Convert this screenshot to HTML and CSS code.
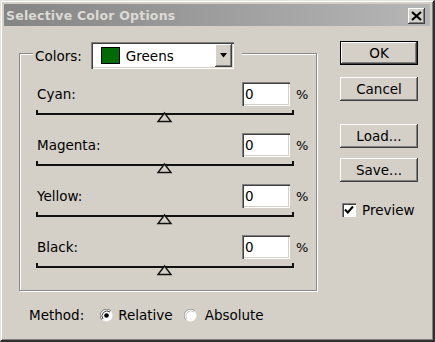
FILE: index.html
```html
<!DOCTYPE html>
<html>
<head>
<meta charset="utf-8">
<link rel="stylesheet" href="styles.css">
</head>
<body>
<div class="window">
  <div class="titlebar">
    <span class="title">Selective Color Options</span>
    <span class="close">
      <svg width="11" height="10" viewBox="0 0 11 10"><path d="M1 1 L10 9 M10 1 L1 9" stroke="#000" stroke-width="2.2" fill="none"/></svg>
    </span>
  </div>
  <div class="main">
    <div class="left">
      <div class="group">
        <div class="group-head">
          <span class="lbl">Colors:</span>
          <div class="select">
            <span class="swatch"></span>
            <span class="select-text">Greens</span>
            <span class="select-btn"><svg width="9" height="5" viewBox="0 0 9 5"><path d="M1 0 H8 L4.5 4.5 Z" fill="#000"/></svg></span>
          </div>
        </div>
        <div class="rows">
          <div class="row">
            <div class="row-top"><span class="row-lbl">Cyan:</span><span class="num">0</span><span class="pct">%</span></div>
            <svg class="slider" width="258" height="15" viewBox="0 0 258 15"><path d="M1 2 V7 M257 2 V7" stroke="#111" stroke-width="2"/><path d="M0 6 H258" stroke="#111" stroke-width="2"/><path d="M128.5 5 L135 13.5 H122 Z" fill="#d4d0c8" stroke="#111" stroke-width="1.4"/></svg>
          </div>
          <div class="row">
            <div class="row-top"><span class="row-lbl">Magenta:</span><span class="num">0</span><span class="pct">%</span></div>
            <svg class="slider" width="258" height="15" viewBox="0 0 258 15"><path d="M1 2 V7 M257 2 V7" stroke="#111" stroke-width="2"/><path d="M0 6 H258" stroke="#111" stroke-width="2"/><path d="M128.5 5 L135 13.5 H122 Z" fill="#d4d0c8" stroke="#111" stroke-width="1.4"/></svg>
          </div>
          <div class="row">
            <div class="row-top"><span class="row-lbl">Yellow:</span><span class="num">0</span><span class="pct">%</span></div>
            <svg class="slider" width="258" height="15" viewBox="0 0 258 15"><path d="M1 2 V7 M257 2 V7" stroke="#111" stroke-width="2"/><path d="M0 6 H258" stroke="#111" stroke-width="2"/><path d="M128.5 5 L135 13.5 H122 Z" fill="#d4d0c8" stroke="#111" stroke-width="1.4"/></svg>
          </div>
          <div class="row">
            <div class="row-top"><span class="row-lbl">Black:</span><span class="num">0</span><span class="pct">%</span></div>
            <svg class="slider" width="258" height="15" viewBox="0 0 258 15"><path d="M1 2 V7 M257 2 V7" stroke="#111" stroke-width="2"/><path d="M0 6 H258" stroke="#111" stroke-width="2"/><path d="M128.5 5 L135 13.5 H122 Z" fill="#d4d0c8" stroke="#111" stroke-width="1.4"/></svg>
          </div>
        </div>
      </div>
      <div class="method">
        <span>Method:</span>
        <svg class="radio r1" width="13" height="13" viewBox="0 0 13 13"><circle cx="6.5" cy="6.5" r="6" fill="#fff"/><path d="M11 2 A6 6 0 0 0 2 11" stroke="#808080" stroke-width="1" fill="none"/><path d="M10 3 A5 5 0 0 0 3 10" stroke="#404040" stroke-width="1" fill="none"/><circle cx="6.5" cy="6.5" r="2.3" fill="#000"/></svg>
        <span class="rlbl">Relative</span>
        <svg class="radio r2" width="13" height="13" viewBox="0 0 13 13"><circle cx="6.5" cy="6.5" r="6" fill="#fff"/><path d="M11 2 A6 6 0 0 0 2 11" stroke="#a0a0a0" stroke-width="1" fill="none"/><path d="M10 3 A5 5 0 0 0 3 10" stroke="#c8c8c8" stroke-width="1" fill="none"/></svg>
        <span class="rlbl2">Absolute</span>
      </div>
    </div>
    <div class="right">
      <div class="btn btn-default">OK</div>
      <div class="btn b-cancel">Cancel</div>
      <div class="btn b-load">Load...</div>
      <div class="btn b-save">Save...</div>
      <div class="check-row">
        <span class="check"><svg width="10" height="10" viewBox="0 0 10 10"><path d="M1 4.5 L3.8 7.5 L9 1.5" stroke="#000" stroke-width="2" fill="none"/></svg></span>
        <span class="check-lbl">Preview</span>
      </div>
    </div>
  </div>
</div>
</body>
</html>
```
FILE: styles.css
```css
html, body {
  margin: 0;
  padding: 0;
  background: #d4d0c8;
}
body {
  font-family: "DejaVu Sans", sans-serif;
  font-size: 13.5px;
  color: #000;
}
.window {
  width: 435px;
  height: 342px;
  box-sizing: border-box;
  background: #d4d0c8;
  border-style: solid;
  border-width: 1px 2px 2px 1px;
  border-color: #e4e2dc #303030 #303030 #e4e2dc;
  box-shadow: inset 1px 1px 0 #fff, inset -1px -1px 0 #808080;
  padding: 3px 3px 0 3px;
}
.titlebar {
  height: 22px;
  display: flex;
  align-items: center;
  justify-content: space-between;
  background: linear-gradient(to right, #858585, #b6b6b6);
  padding: 0 5px 0 2px;
}
.title {
  font-weight: bold;
  font-size: 12.5px;
  color: #dcdad4;
  letter-spacing: 0.2px;
}
.close {
  width: 17px;
  height: 16px;
  margin-top: 1px;
  box-sizing: border-box;
  background: #d4d0c8;
  box-shadow: inset -1px -1px 0 #404040, inset 1px 1px 0 #fff, inset -2px -2px 0 #808080;
  display: flex;
  align-items: center;
  justify-content: center;
}
.main {
  display: flex;
}
.left {
  margin-left: 15px;
  margin-top: 27px;
  width: 298px;
}
.group {
  box-sizing: border-box;
  width: 298px;
  border: 1px solid #8a8a8a;
  box-shadow: inset 1px 1px 0 #fff, 1px 1px 0 #fff;
  padding: 0 10px 14px 16px;
}
.group-head {
  display: flex;
  align-items: center;
  width: max-content;
  margin-top: -12px;
  margin-left: -3px;
  padding: 0 8px 0 2px;
  background: #d4d0c8;
}
.lbl {
  margin-right: 9px;
}
.select {
  display: flex;
  align-items: center;
  width: 143px;
  height: 27px;
  box-sizing: border-box;
  padding: 2px;
  background: #fff;
  box-shadow: inset 1px 1px 0 #808080, inset 2px 2px 0 #404040, inset -1px -1px 0 #fff, inset -2px -2px 0 #d4d0c8;
}
.swatch {
  width: 19px;
  height: 17px;
  box-sizing: border-box;
  margin-left: 8px;
  border: 1px solid #000;
  background: #006a06;
}
.select-text {
  flex: 1;
  margin-left: 6px;
}
.select-btn {
  width: 17px;
  height: 23px;
  box-sizing: border-box;
  background: #d4d0c8;
  box-shadow: inset -1px -1px 0 #404040, inset 1px 1px 0 #fff, inset -2px -2px 0 #808080;
  display: flex;
  align-items: center;
  justify-content: center;
}
.rows {
  display: flex;
  flex-direction: column;
  gap: 10px;
  margin-top: 13px;
}
.row-top {
  display: flex;
  align-items: center;
  height: 24px;
}
.row-lbl {
  flex: 1;
  padding-left: 1px;
}
.num {
  width: 48px;
  height: 24px;
  box-sizing: border-box;
  background: #fff;
  box-shadow: inset 1px 1px 0 #808080, inset 2px 2px 0 #404040, inset -1px -1px 0 #fff, inset -2px -2px 0 #d4d0c8;
  padding-left: 3px;
  line-height: 24px;
}
.pct {
  width: 10px;
  margin-left: 6px;
  font-size: 13px;
}
.slider {
  display: block;
  margin-top: 2px;
}
.method {
  display: flex;
  align-items: center;
  height: 18px;
  margin-top: 15px;
  margin-left: 10px;
}
.r1 {
  margin-left: 16px;
}
.rlbl {
  margin-left: 5px;
}
.r2 {
  margin-left: 11px;
}
.rlbl2 {
  margin-left: 8px;
}
.right {
  margin-left: 23px;
  margin-top: 15px;
  width: 78px;
  display: flex;
  flex-direction: column;
}
.btn {
  height: 24px;
  box-sizing: border-box;
  background: #d4d0c8;
  box-shadow: inset -1px -1px 0 #404040, inset 1px 1px 0 #fff, inset -2px -2px 0 #808080;
  display: flex;
  align-items: center;
  justify-content: center;
}
.btn-default {
  border: 1px solid #000;
}
.b-cancel {
  margin-top: 12px;
}
.b-load {
  margin-top: 23px;
}
.b-save {
  margin-top: 10px;
}
.check-row {
  display: flex;
  align-items: center;
  height: 18px;
  margin-top: 19px;
  margin-left: 2px;
}
.check {
  width: 14px;
  height: 14px;
  box-sizing: border-box;
  background: #fff;
  box-shadow: inset 1px 1px 0 #808080, inset 2px 2px 0 #404040, inset -1px -1px 0 #fff;
  display: flex;
  align-items: center;
  justify-content: center;
}
.check-lbl {
  margin-left: 6px;
}
```
